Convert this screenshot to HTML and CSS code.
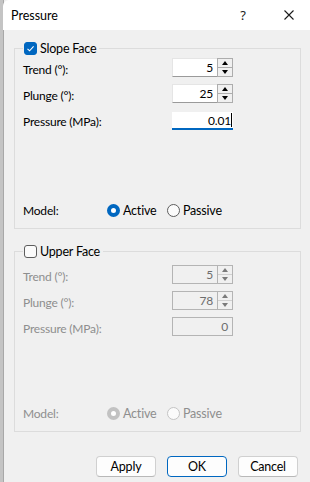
FILE: index.html
```html
<!DOCTYPE html>
<html lang="en">
<head>
  <meta charset="UTF-8" />
  <title>Pressure</title>
  <link rel="stylesheet" href="styles.css">
</head>
<body>

<div class="window">
  <div class="titlebar">
    <span class="title">Pressure</span>
    <span class="help">?</span>
    <span class="close">
      <svg width="10" height="10" viewBox="0 0 10 10"><path d="M0.5 0.5 L9.5 9.5 M9.5 0.5 L0.5 9.5" stroke="#1a1a1a" stroke-width="1.1" fill="none"/></svg>
    </span>
  </div>

  <div class="content">
    <fieldset class="group">
      <legend>
        <span class="check checked">
          <svg width="9" height="9" viewBox="0 0 9 9"><path d="M1.5 4.8 L3.6 6.8 L7.6 2.4" stroke="#fff" stroke-width="1.1" fill="none"/></svg>
        </span>
        Slope Face
      </legend>
      <div class="group-body">
        <div class="row">
          <span class="label">Trend (&deg;):</span>
          <div class="spin">
            <span class="spin-value">5</span>
            <span class="spin-btns"><i class="up"></i><i class="down"></i></span>
          </div>
        </div>
        <div class="row">
          <span class="label">Plunge (&deg;):</span>
          <div class="spin">
            <span class="spin-value">25</span>
            <span class="spin-btns"><i class="up"></i><i class="down"></i></span>
          </div>
        </div>
        <div class="row">
          <span class="label">Pressure (MPa):</span>
          <div class="field focused"><span>0.01</span><span class="caret"></span></div>
        </div>
        <div class="row model">
          <span class="label">Model:</span>
          <span class="radio on"></span><span class="radio-text">Active</span>
          <span class="radio"></span><span class="radio-text">Passive</span>
        </div>
      </div>
    </fieldset>

    <fieldset class="group disabled">
      <legend>
        <span class="check"></span>
        Upper Face
      </legend>
      <div class="group-body">
        <div class="row">
          <span class="label">Trend (&deg;):</span>
          <div class="spin">
            <span class="spin-value">5</span>
            <span class="spin-btns"><i class="up"></i><i class="down"></i></span>
          </div>
        </div>
        <div class="row">
          <span class="label">Plunge (&deg;):</span>
          <div class="spin">
            <span class="spin-value">78</span>
            <span class="spin-btns"><i class="up"></i><i class="down"></i></span>
          </div>
        </div>
        <div class="row">
          <span class="label">Pressure (MPa):</span>
          <div class="field"><span>0</span></div>
        </div>
        <div class="row model">
          <span class="label">Model:</span>
          <span class="radio on"></span><span class="radio-text">Active</span>
          <span class="radio"></span><span class="radio-text">Passive</span>
        </div>
      </div>
    </fieldset>

    <div class="buttons">
      <button>Apply</button>
      <button class="default">OK</button>
      <button>Cancel</button>
    </div>
  </div>
</div>

</body>
</html>
```

FILE: styles.css
```css
body {
  margin: 0;
  background: #f0f0f0;
  font-family: Lato, 'Noto Sans', sans-serif;
  font-size: 12px;
  letter-spacing: -0.2px;
  color: #000;
}
.window {
  width: 310px;
  height: 482px;
  box-sizing: border-box;
  border-left: 3px solid #c4c4c4;
  box-shadow: inset 1px 0 0 #a8a8a8;
  background: #f0f0f0;
  overflow: hidden;
}
.titlebar {
  height: 30px;
  background: #fff;
  display: flex;
  align-items: center;
  padding-left: 8px;
  border-top-left-radius: 6px;
  font-size: 12.5px;
  letter-spacing: 0;
}
.title {
  flex: 1;
}
.help {
  width: 46px;
  text-align: center;
  font-family: 'Noto Sans', sans-serif;
  font-size: 13px;
  color: #1a1a1a;
}
.close {
  width: 46px;
  display: flex;
  justify-content: center;
  margin-right: -2px;
}
.content {
  padding: 10px 9px 0 11px;
}
.group {
  margin: 0 0 14px 0;
  padding: 2px 8px 10px 8px;
  border: 1px solid #dcdcdc;
  min-width: 0;
}
.group + .group {
  padding-top: 6px;
}
.group legend {
  padding: 0 3px 0 1px;
  height: 16px;
  display: flex;
  align-items: center;
  gap: 3px;
  font-size: 12.5px;
}
.check {
  width: 13px;
  height: 13px;
  box-sizing: border-box;
  border-radius: 3px;
  border: 1px solid #5d5d5d;
  background: #fbfbfb;
  display: flex;
  align-items: center;
  justify-content: center;
}
.check.checked {
  background: #0067c0;
  border-color: #0067c0;
}
.group-body {
  height: 160px;
  display: flex;
  flex-direction: column;
  gap: 7px;
}
.group + .group .group-body {
  height: 156px;
}
.row {
  display: flex;
  align-items: center;
  height: 19px;
}
.label {
  width: 149px;
  margin-top: 3px;
}
.spin {
  display: flex;
  width: 61px;
  height: 19px;
}
.spin-value {
  flex: 1;
  background: #fff;
  border: 1px solid #e5e5e5;
  border-bottom-color: #9a9a9a;
  border-right: none;
  text-align: right;
  padding-right: 4px;
  line-height: 18px;
}
.spin-btns {
  width: 16px;
  box-sizing: border-box;
  border: 1px solid #adadad;
  background: #f0f0f0;
  display: flex;
  flex-direction: column;
}
.spin-btns i {
  flex: 1;
  display: flex;
  align-items: center;
  justify-content: center;
}
.spin-btns i.up {
  border-bottom: 1px solid #adadad;
}
.spin-btns i::after {
  content: '';
  border-left: 3px solid transparent;
  border-right: 3px solid transparent;
}
.spin-btns i.up::after {
  border-bottom: 4px solid #000;
}
.spin-btns i.down::after {
  border-top: 4px solid #000;
}
.field {
  width: 61px;
  height: 19px;
  box-sizing: border-box;
  background: #fff;
  display: flex;
  justify-content: flex-end;
  align-items: center;
  padding-right: 4px;
}
.field.focused {
  margin-top: 3px;
  height: 18px;
  border-bottom: 2px solid #0067c0;
  padding-right: 1px;
}
.caret {
  width: 1px;
  height: 14px;
  background: #000;
}
.model {
  margin-top: auto;
  height: 16px;
}
.model .label {
  width: 84px;
  margin-top: 1px;
}
.radio {
  width: 13px;
  height: 13px;
  box-sizing: border-box;
  border-radius: 50%;
  border: 1px solid #5d5d5d;
  background: #fbfbfb;
}
.radio.on {
  border: 4px solid #0067c0;
  background: #fff;
}
.radio-text {
  margin: 1px 0 0 3px;
  width: 44px;
  font-size: 12.5px;
}
.buttons {
  display: flex;
  justify-content: flex-end;
  gap: 11px;
  margin-top: 24px;
  padding-right: 3px;
}
.buttons button {
  width: 60px;
  height: 21px;
  padding: 0;
  font-family: inherit;
  font-size: 12.5px;
  letter-spacing: -0.2px;
  color: #000;
  background: #fdfdfd;
  border: 1px solid #d0d0d0;
  border-bottom-color: #b8b8b8;
  border-radius: 4px;
}
.buttons button.default {
  border: 1px solid #0067c0;
}

/* disabled group */
.disabled .label,
.disabled .radio-text {
  color: #8e8e8e;
}
.disabled .spin-value {
  background: #f0f0f0;
  border: 1px solid #b4b4b4;
  border-right: none;
  color: #6d6d6d;
}
.disabled .spin-btns {
  border-color: #b4b4b4;
}
.disabled .spin-btns i.up {
  border-bottom-color: #d0d0d0;
}
.disabled .spin-btns i.up::after {
  border-bottom-color: #7a7a7a;
}
.disabled .spin-btns i.down::after {
  border-top-color: #7a7a7a;
}
.disabled .field {
  background: #f0f0f0;
  border: 1px solid #b4b4b4;
  color: #6d6d6d;
}
.disabled .radio {
  border-color: #c4c4c4;
}
.disabled .radio.on {
  border: 4px solid #c2c2c2;
}
```
